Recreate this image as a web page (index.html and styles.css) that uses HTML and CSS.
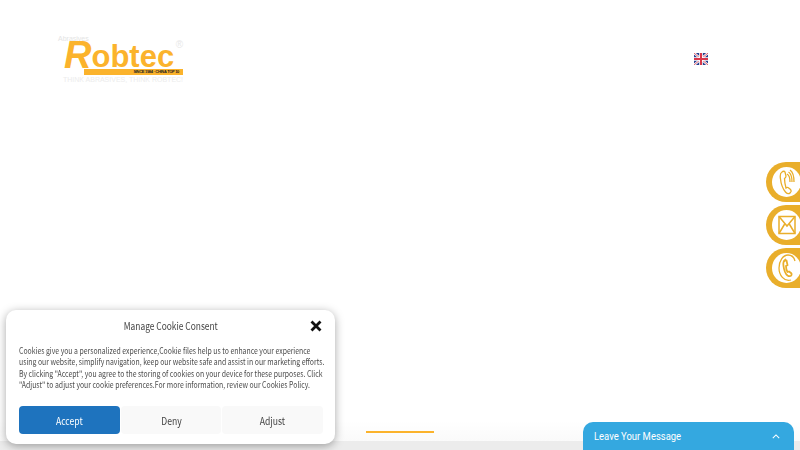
FILE: index.html
```html
<!doctype html>
<html>
	<head>
		<meta charset="utf-8">
		<title>Robtec</title>
		<link rel="stylesheet" href="styles.css">
	</head>
	<body>
		<div class="page">
			<header class="header">
				<div class="logo">
					<div class="logo-top">Abrasives</div>
					<div class="logo-name"><span class="logo-r">R</span><span class="logo-rest">obtec</span><span class="logo-reg">®</span></div>
					<div class="logo-bar">SINCE 1984 · CHINA TOP 10</div>
					<div class="logo-tag">THINK ABRASIVES, THINK ROBTEC!</div>
				</div>
				<svg class="flag" viewBox="0 0 14 12" width="14" height="12">
					<rect width="14" height="12" rx="1.5" fill="#27408f"/>
					<path d="M0 0L14 12M14 0L0 12" stroke="#fff" stroke-width="2.4"/>
					<path d="M0 0L14 12M14 0L0 12" stroke="#d8374a" stroke-width="0.8"/>
					<path d="M7 0V12M0 6H14" stroke="#fff" stroke-width="3.6"/>
					<path d="M7 0V12M0 6H14" stroke="#d8374a" stroke-width="2"/>
				</svg>
			</header>
			<div class="hero">
				<div class="hero-tab"></div>
			</div>
			<div class="band"></div>
		</div>

		<div class="side-btns">
			<div class="side-btn">
				<div class="side-circle">
					<svg viewBox="0 0 16 26" width="16" height="26" fill="none" stroke="#e9ae2b" stroke-width="1.300">
						<path d="M3 3C1 4 1 7 1.500 10c.5 5 2.500 10 5 13 1.500 2 3.500 2 4.500 1l1-1.500c.5-1-.5-2-1-2.500l-2-1.500c-1-.5-1.500 0-2 .5C6.500 17 5.500 12 5.500 9.500c.5-.5 1.500-1 1.500-2.500L6 3C5.500 2 4 2 3 3z"/>
						<path d="M8 5c2 1 3 4 3 8M9.500 3c2.500 1.500 3.500 5 3.500 10M11 1c3 2 4 7 4 12"/>
					</svg>
				</div>
			</div>
			<div class="side-btn">
				<div class="side-circle">
					<svg viewBox="0 0 18 20" width="18" height="20" fill="none" stroke="#e9ae2b" stroke-width="1.500">
						<rect x="1" y="1.500" width="16" height="17"/>
						<path d="M1 1.500l8 9.500 8-9.500M1 18.500l6-10M17 18.500l-6-10"/>
					</svg>
				</div>
			</div>
			<div class="side-btn">
				<div class="side-circle">
					<svg viewBox="0 0 18 28" width="18" height="28" fill="none" stroke="#e9ae2b" stroke-width="1.300">
						<path d="M13 26C6 28 1 21 1 14 1 7 5 1 10 1c3 0 6 2 7 6"/>
						<path d="M7 6c-1.500 1-2 3-1.500 6 .5 4 2 8 4 9.500 1.500 1 3.500 1 4-.5.500-1 0-1.500-.5-2l-2-1.500-1.500.5c-1-1.500-1.500-4-1.500-6l1.500-1-1-4.500c-.5-.5-1-.5-1.500 0z" stroke-width="1.800"/>
					</svg>
				</div>
			</div>
		</div>

		<div class="cookie">
			<div class="cookie-head">
				<span class="cookie-title">Manage Cookie Consent</span>
				<svg class="cookie-close" viewBox="0 0 12 12" width="12" height="12">
					<path d="M1.500 1.500L10.500 10.500M10.500 1.500L1.500 10.500" stroke="#111" stroke-width="2.800"/>
				</svg>
			</div>
			<p class="cookie-text">Cookies give you a personalized experience,Cookie files help us to enhance your experience using our website, simplify navigation, keep our website safe and assist in our marketing efforts. By clicking "Accept", you agree to the storing of cookies on your device for these purposes. Click "Adjust" to adjust your cookie preferences.For more information, review our Cookies Policy.</p>
			<div class="cookie-btns">
				<div class="btn btn-accept"><span class="btn-label">Accept</span></div>
				<div class="btn"><span class="btn-label">Deny</span></div>
				<div class="btn"><span class="btn-label">Adjust</span></div>
			</div>
		</div>

		<div class="chat">
			<span class="chat-label">Leave Your Message</span>
			<svg viewBox="0 0 10 6" width="8" height="5" fill="none" stroke="#fff" stroke-width="1.300">
				<path d="M1 5l4-4 4 4"/>
			</svg>
		</div>
	</body>
</html>
```

FILE: styles.css
```css
html, body {
	margin: 0;
	height: 100%;
	overflow: hidden;
	background-color: #fff;
}

body {
	font-family: "Noto Sans CJK SC", "Noto Sans", sans-serif;
	color: #333;
}

.page {
	height: 450px;
	display: flex;
	flex-direction: column;
}

.header {
	display: flex;
	align-items: flex-start;
	justify-content: space-between;
	padding: 35px 92px 0px 58px;
	height: 60px;
}

.logo {
	width: 125px;
	display: flex;
	flex-direction: column;
	font-family: "Liberation Sans", sans-serif;
}

.logo-top {
	font-size: 7px;
	line-height: 7px;
	color: #e4e4e4;
}

.logo-name {
	position: relative;
	height: 27px;
	line-height: 27px;
	margin-left: 6px;
	font-weight: bold;
	color: #fbb32c;
	white-space: nowrap;
}

.logo-r {
	font-size: 38px;
	font-style: italic;
}

.logo-rest {
	font-size: 31px;
	vertical-align: 1px;
}

.logo-reg {
	position: absolute;
	right: 0;
	top: -2px;
	font-size: 10px;
	line-height: 10px;
	font-weight: normal;
	color: #e8e8e8;
}

.logo-bar {
	align-self: flex-end;
	width: 99px;
	height: 6px;
	background-color: #fbb32c;
	color: #222;
	font-size: 4px;
	font-weight: bold;
	letter-spacing: -0.3px;
	line-height: 6px;
	text-align: right;
	box-sizing: border-box;
	padding-right: 4px;
	white-space: nowrap;
	overflow: hidden;
}

.logo-tag {
	margin: 2px 0px 0px 5px;
	font-size: 7px;
	line-height: 6px;
	color: #ececec;
	white-space: nowrap;
}

.flag {
	margin-top: 18px;
}

.hero {
	flex: 1;
	display: flex;
	align-items: flex-end;
	padding-left: 366px;
	background: linear-gradient(to bottom, #fff 94%, #fafafa);
}

.hero-tab {
	width: 68px;
	height: 2px;
	margin-bottom: 8px;
	background-color: #fbb32c;
}

.band {
	height: 9px;
	background-color: #ececec;
}

.side-btns {
	position: fixed;
	top: 162px;
	right: 0;
	display: flex;
	flex-direction: column;
	gap: 3px;
}

.side-btn {
	width: 34px;
	height: 40px;
	box-sizing: border-box;
	padding-left: 6px;
	display: flex;
	align-items: center;
	overflow: hidden;
	background-color: #e9ae2b;
	border-radius: 20px 0 0 20px;
}

.side-circle {
	flex: none;
	width: 29px;
	height: 30px;
	display: flex;
	align-items: center;
	justify-content: center;
	background-color: #fff;
	border-radius: 50%;
}

.cookie {
	position: fixed;
	left: 6px;
	top: 310px;
	width: 329px;
	height: 134px;
	box-sizing: border-box;
	padding: 0px 12px 10px 13px;
	background-color: #fff;
	border-radius: 10px;
	box-shadow: 0 2px 10px rgba(0,0,0,0.35);
}

.cookie-head {
	height: 31px;
	display: flex;
	align-items: center;
	justify-content: center;
	position: relative;
}

.cookie-title {
	font-size: 10.500px;
	color: #444;
	transform: scaleX(0.8);
	white-space: nowrap;
}

.cookie-close {
	position: absolute;
	right: 1px;
	top: 10px;
}

.cookie-text {
	width: 382px;
	height: 61px;
	margin: 4px 0px 0px;
	font-size: 8.600px;
	line-height: 11.300px;
	color: #4c4c4c;
	transform: scaleX(0.8);
	transform-origin: left top;
}

.cookie-btns {
	display: flex;
	gap: 1px;
}

.btn {
	flex: 1;
	height: 28px;
	display: flex;
	align-items: center;
	justify-content: center;
	font-size: 10.500px;
	background-color: #f9f9f9;
	border-radius: 4px;
	color: #444;
}

.btn-label {
	transform: scaleX(0.82);
}

.btn-accept {
	background-color: #1e73be;
	color: #fff;
}

.chat {
	position: fixed;
	left: 583px;
	top: 422px;
	width: 211px;
	height: 28px;
	box-sizing: border-box;
	padding: 0px 14px 0px 11px;
	display: flex;
	align-items: center;
	justify-content: space-between;
	background-color: #34a8e0;
	border-radius: 10px 10px 0 0;
	color: #fff;
	font-family: Roboto, sans-serif;
	font-size: 11px;
}

.chat-label {
	transform: scaleX(0.86);
	transform-origin: left center;
}
```
